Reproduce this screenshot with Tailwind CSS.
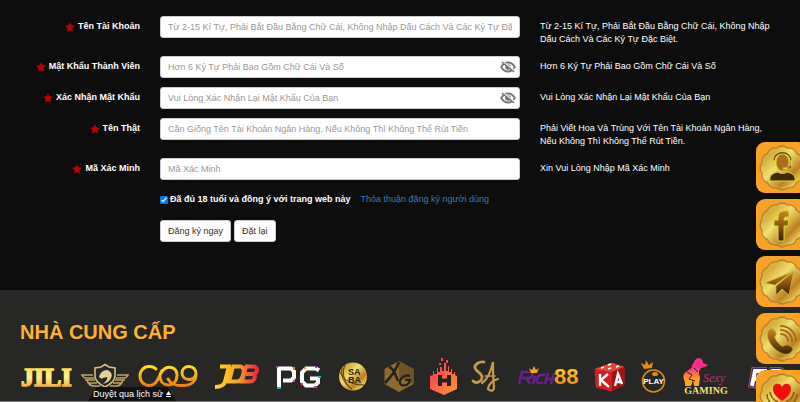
<!DOCTYPE html>
<html lang="vi">
<head>
    <meta charset="UTF-8">
    <meta name="viewport" content="width=device-width, initial-scale=1.0">
    <title>Đăng ký</title>
    <script src="https://cdn.jsdelivr.net/npm/@tailwindcss/browser@4"></script>
</head>
<body class="flex min-h-screen flex-col bg-[#0d0d0d] font-['Liberation_Sans',Arial,sans-serif] text-[9px] leading-[13px] text-white">

    <!-- shared shapes -->
    <svg class="absolute size-0" aria-hidden="true">
        <defs>
            <linearGradient id="metal" x1="0" y1="0" x2="1" y2="1">
                <stop offset="0" stop-color="#b98b2c"/>
                <stop offset=".25" stop-color="#d9b540"/>
                <stop offset=".42" stop-color="#efdf70"/>
                <stop offset=".68" stop-color="#bd8120"/>
                <stop offset=".85" stop-color="#ecd05c"/>
                <stop offset="1" stop-color="#a86f1c"/>
            </linearGradient>
            <linearGradient id="dark" x1="0" y1="0" x2="0" y2="1">
                <stop offset="0" stop-color="#d08a1c"/>
                <stop offset="1" stop-color="#3a2008"/>
            </linearGradient>
            <linearGradient id="gold" x1="0" y1="0" x2="0" y2="1">
                <stop offset="0" stop-color="#ffd92a"/>
                <stop offset=".5" stop-color="#fff08a"/>
                <stop offset="1" stop-color="#e08a12"/>
            </linearGradient>
            <linearGradient id="amber" x1="0" y1="0" x2="0" y2="1">
                <stop offset="0" stop-color="#ffdf1c"/>
                <stop offset="1" stop-color="#f07d13"/>
            </linearGradient>
            <linearGradient id="fire" x1="0" y1="0" x2="1" y2="0">
                <stop offset="0" stop-color="#ffdc1f"/>
                <stop offset=".55" stop-color="#f8a02a"/>
                <stop offset="1" stop-color="#f0283c"/>
            </linearGradient>
            <linearGradient id="coral" x1="0" y1="0" x2="1" y2="1">
                <stop offset="0" stop-color="#fb2f57"/>
                <stop offset="1" stop-color="#ff9a35"/>
            </linearGradient>
            <linearGradient id="pink" x1="0" y1="0" x2="0" y2="1">
                <stop offset=".35" stop-color="#ff2c8c"/>
                <stop offset=".75" stop-color="#ffa21f"/>
            </linearGradient>
            <symbol id="star" viewBox="0 0 10 10"><path d="M5 .2l1.500 3.100 3.400.500-2.500 2.400.600 3.400L5 8 2 9.600l.600-3.400L.100 3.800l3.400-.500z" fill="#c00000"/></symbol>
            <symbol id="eye-off" viewBox="0 0 16 12">
                <path d="M1.200 6C3 2.900 5.400 1.500 8 1.500S13 2.900 14.800 6C13 9.100 10.600 10.500 8 10.500S3 9.100 1.200 6z" fill="none" stroke="#777" stroke-width="1.800"/>
                <circle cx="8" cy="6" r="2.800" fill="#777"/>
                <path d="M2.800 .600L15 10.200" stroke="#fff" stroke-width="1.500"/>
                <path d="M1.800 1L14.200 11" stroke="#777" stroke-width="1.600"/>
            </symbol>
            <symbol id="badge" viewBox="0 0 51 51">
                <path d="M45.800 31.300A7.500 7.500 0 0 1 40.500 40.500A7.500 7.500 0 0 1 31.300 45.800A7.500 7.500 0 0 1 20.700 45.800A7.500 7.500 0 0 1 11.500 40.500A7.500 7.500 0 0 1 6.200 31.300A7.500 7.500 0 0 1 6.200 20.700A7.500 7.500 0 0 1 11.500 11.500A7.500 7.500 0 0 1 20.700 6.200A7.500 7.500 0 0 1 31.300 6.200A7.500 7.500 0 0 1 40.500 11.500A7.500 7.500 0 0 1 45.800 20.700A7.500 7.500 0 0 1 45.800 31.300z" fill="url(#metal)" stroke="#b9822a" stroke-width="1.300" stroke-linejoin="round"/>
                <circle cx="26" cy="26" r="19.500" fill="none" stroke="#f0dc78" stroke-width="1" opacity=".3"/>
            </symbol>
        </defs>
    </svg>

    <form class="pt-4 pb-12">
        <div class="grid grid-cols-[140px_minmax(0,3fr)_minmax(0,2fr)] items-start gap-x-5 gap-y-[9px] pr-5">
            <label for="account" class="flex items-center justify-end gap-[3px] pt-1 font-bold"><svg class="size-[10px]"><use href="#star"/></svg>Tên Tài Khoản</label>
            <input id="account" type="text" placeholder="Từ 2-15 Kí Tự, Phải Bắt Đầu Bằng Chữ Cái, Không Nhập Dấu Cách Và Các Ký Tự Đặc Biệt." class="h-[22px] w-full rounded-[3px] border border-[#ccc] bg-white px-[7px] text-[#555] placeholder:text-[#999]">
            <p class="pt-1 pb-px">Từ 2-15 Kí Tự, Phải Bắt Đầu Bằng Chữ Cái, Không Nhập Dấu Cách Và Các Ký Tự Đặc Biệt.</p>

            <label for="password" class="flex items-center justify-end gap-[3px] pt-1 font-bold"><svg class="size-[10px]"><use href="#star"/></svg>Mật Khẩu Thành Viên</label>
            <div class="relative">
                <input id="password" type="password" placeholder="Hơn 6 Ký Tự Phải Bao Gồm Chữ Cái Và Số" class="block h-[22px] w-full rounded-[3px] border border-[#ccc] bg-white px-[7px] text-[#555] placeholder:text-[#999]">
                <button type="button" aria-label="Hiện mật khẩu" class="absolute top-[5px] right-1"><svg class="h-3 w-4"><use href="#eye-off"/></svg></button>
            </div>
            <p class="pt-1 pb-px">Hơn 6 Ký Tự Phải Bao Gồm Chữ Cái Và Số</p>

            <label for="confirm" class="flex items-center justify-end gap-[3px] pt-1 font-bold"><svg class="size-[10px]"><use href="#star"/></svg>Xác Nhận Mật Khẩu</label>
            <div class="relative">
                <input id="confirm" type="password" placeholder="Vui Lòng Xác Nhận Lại Mật Khẩu Của Bạn" class="block h-[22px] w-full rounded-[3px] border border-[#ccc] bg-white px-[7px] text-[#555] placeholder:text-[#999]">
                <button type="button" aria-label="Hiện mật khẩu" class="absolute top-[5px] right-1"><svg class="h-3 w-4"><use href="#eye-off"/></svg></button>
            </div>
            <p class="pt-1 pb-px">Vui Lòng Xác Nhận Lại Mật Khẩu Của Bạn</p>

            <label for="realname" class="flex items-center justify-end gap-[3px] pt-1 font-bold"><svg class="size-[10px]"><use href="#star"/></svg>Tên Thật</label>
            <input id="realname" type="text" placeholder="Cần Giống Tên Tài Khoản Ngân Hàng, Nếu Không Thì Không Thể Rút Tiền" class="h-[22px] w-full rounded-[3px] border border-[#ccc] bg-white px-[7px] text-[#555] placeholder:text-[#999]">
            <p class="pt-1 pb-px">Phải Viết Hoa Và Trùng Với Tên Tài Khoản Ngân Hàng, Nếu Không Thì Không Thể Rút Tiền.</p>

            <label for="captcha" class="flex items-center justify-end gap-[3px] pt-1 font-bold"><svg class="size-[10px]"><use href="#star"/></svg>Mã Xác Minh</label>
            <input id="captcha" type="text" placeholder="Mã Xác Minh" class="h-[22px] w-full rounded-[3px] border border-[#ccc] bg-white px-[7px] text-[#555] placeholder:text-[#999]">
            <p class="pt-1 pb-px">Xin Vui Lòng Nhập Mã Xác Minh</p>
        </div>

        <div class="mt-[13px] flex items-center pl-40">
            <input id="agree" type="checkbox" checked class="mr-[2px] size-2 accent-[#0075ff]">
            <label for="agree" class="font-bold">Đã đủ 18 tuổi và đồng ý với trang web này</label>
            <a href="#" class="ml-[10px] text-[#337ab7]">Thỏa thuận đăng ký người dùng</a>
        </div>

        <div class="mt-[14px] flex gap-[3px] pl-40">
            <button type="submit" class="h-[22px] rounded-[3px] border border-[#ccc] bg-white px-[7px] text-[#333]">Đăng ký ngay</button>
            <button type="reset" class="h-[22px] rounded-[3px] border border-[#ccc] bg-white px-[7px] text-[#333]">Đặt lại</button>
        </div>
    </form>

    <section class="flex-1 overflow-hidden border-b border-[#777] bg-[#272725] pt-[30px] pb-1 pl-5">
        <h2 class="text-[20px] leading-6 font-bold text-[#ffb135]">NHÀ CUNG CẤP</h2>
        <div class="mt-[13px] flex gap-2">
            <!-- JILI -->
            <svg class="h-10 w-[53px] shrink-0" viewBox="0 0 53 40">
                <text x="1" y="29" font-family="Liberation Serif" font-size="26" font-weight="bold" fill="url(#gold)" stroke="url(#gold)" stroke-width="1.600">JILI</text>
            </svg>
            <!-- winged shield -->
            <svg class="h-10 w-[49px] shrink-0" viewBox="0 0 49 40" fill="none" stroke="#bfa265" stroke-width="1.600">
                <path d="M24 7.500l4 2.500 6 1v8c0 5-4 8-10 11-6-3-10-6-10-11v-8l6-1z" stroke="#d6bd84"/>
                <path d="M18 20c1-4 4-7 8-7 4 1 6 5 4 8-1 3-4 5-8 6 3-3 5-5 4-7-2 1-4 0-5 2z" fill="#e3cf9b" stroke="none"/>
                <path d="M12 18H1c1 2 2 3 4 3h8M4 23h10M6 23c1 4 3 6 7 6h6M8 26h8M36 18h11c-1 2-2 3-4 3h-8M44 23H34M42 23c-1 4-3 6-7 6h-6M40 26h-8"/>
            </svg>
            <!-- CQ9 -->
            <svg class="h-10 w-[60px] shrink-0" viewBox="0 0 60 40" fill="none" stroke="url(#amber)" stroke-width="3" stroke-linecap="round">
                <path d="M18 12c-2-2-4-2.500-7-2.500-5 0-9 4-9 9.500s4 9.500 9 9.500c8 0 9-8 13-14 5-7 15-5 15 4 0 6-4 9.500-8.500 9.500S22 25 22 19c0-2 1-4 2-5.500M30 22c3 5 6 6.500 12 6.500h3c8 0 13-4 13-11 0-5-3-8-7-8s-7 2.500-7 6.500 3 6.500 7 6.500 6-2 7-5"/>
            </svg>
            <!-- JDB -->
            <svg class="h-10 w-[54px] shrink-0" viewBox="0 0 54 40" fill="none" stroke="url(#fire)" stroke-width="4">
                <path d="M14 9.500h9l-4 15c-1 4-4 5.500-10 5.500M27 9.500l-4 15h8c6 0 10-15 3-15h-8M39 9.500h8c6 0 5 7 0 7.500h-7M41 17h5c5 0 3 7.500-2 7.500h-8l4-15"/>
            </svg>
            <!-- PG -->
            <svg class="h-10 w-[54px] shrink-0" viewBox="0 0 54 40" fill="none">
                <path d="M11 31V11.500h12l3 3v6l-3 3H15M51 13.500l-3-2H38l-4 4v9l4 4h9l3-3v-4h-8" stroke="#fff" stroke-width="4"/>
                <path d="M8 9h2v2H8zM47 9h2v2h-2z" fill="#b436e8"/>
                <path d="M25 10h2v3h-2zM36 10h2v2h-2z" fill="#ff852c"/>
                <path d="M9 30h4v2H9zM50 19h3v2h-3z" fill="#20b7c7"/>
                <path d="M25 23h2v2h-2zM33 26h2v2h-2zM46 29h3v2h-3z" fill="#e83b72"/>
            </svg>
            <!-- SABA -->
            <svg class="h-10 w-[38px] shrink-0" viewBox="0 0 38 40">
                <circle cx="23" cy="19.500" r="14" fill="url(#metal)"/>
                <path d="M12 11c-1 8 1 15 10 21M10 15c4 8 11 13 24 13M15 8c-3 7-2 14 4 22" fill="none" stroke="#4d3b17" stroke-width="1"/>
                <text x="18" y="18" font-family="Liberation Sans" font-size="9" font-weight="bold" fill="#2c220e">SA</text>
                <text x="18" y="26" font-family="Liberation Sans" font-size="9" font-weight="bold" fill="#2c220e">BA</text>
            </svg>
            <!-- XG -->
            <svg class="h-10 w-[38px] shrink-0" viewBox="0 0 38 40">
                <path d="M23 4l14.500 8v15L23 35 8.500 27V12z" fill="#8f6a2e"/>
                <path d="M23 4l14.500 8v15L23 20z" fill="#6d5428"/>
                <path d="M13 10c4 1 6 6 9 14M23 5c-3 8-8 15-14 21" fill="none" stroke="#24221d" stroke-width="2.500"/>
                <path d="M34 19c-4-2-9 1-10 5-1 5 5 6 9 2l1-3h-5" fill="none" stroke="#24221d" stroke-width="2.200"/>
            </svg>
            <!-- H -->
            <svg class="h-10 w-[36px] shrink-0" viewBox="0 0 36 40">
                <path d="M8 19l3-1v-4h1v3h3v-6h1v4h2v-5h2v4h2V6h2v8h2V9h1v6h2v-3h1v5h2v-2h1v3l2 1v13l-13 6L8 32z" fill="url(#coral)"/>
                <path d="M19 1h2v3h-2zM17 6h2v2h-2zM24 3h2v3h-2z" fill="#f34a4d"/>
                <path d="M18 18v11M27 18v11M17 23.500h11" stroke="#29211f" stroke-width="4"/>
            </svg>
            <!-- SA -->
            <svg class="h-10 w-[36px] shrink-0" viewBox="0 0 36 40" fill="none" stroke="#c69a4a" stroke-linecap="round">
                <path d="M18 5c-5-1-10 3-9 6 1 4 8 5 7 10-1 4-6 6-9 3" stroke-width="2.800"/>
                <path d="M16 26c5-3 9-12 11-21 0 9 0 19 1 25 0 4-3 5-6 2 1-6 6-9 10-10" stroke-width="2.200"/>
                <path d="M19 19h10" stroke-width="1.500"/>
            </svg>
            <!-- Rich88 -->
            <svg class="h-10 w-[69px] shrink-0" viewBox="0 0 69 40">
                <path d="M9 27l3-12h8c4 0 3 6-1 6h-7M16 21l4 6M23 27l2-8M35 18h-4c-4 0-6 8-2 8h4M38 16l-3 11M44 16l-3 11M37 22h6" fill="none" stroke="#69208d" stroke-width="2.600"/>
                <path d="M21 16l-2-5 3 2 2-4 2 4 3-2-2 5z" fill="#f6a21c"/>
                <text x="44" y="27" font-family="Liberation Sans" font-size="22" font-weight="bold" fill="url(#amber)">88</text>
            </svg>
            <!-- KA -->
            <svg class="h-10 w-[38px] shrink-0" viewBox="0 0 38 40">
                <path d="M8 12l17-6 12 4v18l-13 6-15-4z" fill="#cf2020" stroke="#cf2020" stroke-linejoin="round"/>
                <path d="M8 12l17-6 12 4-12 5z" fill="#e0483a"/>
                <path d="M25 15l12-5v18l-12 6z" fill="#a80f15"/>
                <path d="M14 11l3-1M21 8l3-1M21 12l3-1M29 10l3-1" stroke="#fff" stroke-width="1.500"/>
                <path d="M13 17v12M21 17l-7 6 8 7M28 29l3-12 4 10M29 25h5" fill="none" stroke="#fff" stroke-width="2.400"/>
            </svg>
            <!-- PLAY -->
            <svg class="h-10 w-[33px] shrink-0" viewBox="0 0 33 40">
                <path d="M11 12L8 6l4 2 1-5 3 5 4-3-1 6z" fill="#e08a1e"/>
                <circle cx="20.500" cy="24" r="11" fill="#272725" stroke="#e08a1e" stroke-width="1.600"/>
                <ellipse cx="22" cy="17" rx="3" ry="2" fill="#e08a1e"/>
                <text x="20.500" y="27" text-anchor="middle" font-family="Liberation Sans" font-size="8" font-weight="bold" fill="#fff">PLAY</text>
            </svg>
            <!-- Sexy Gaming -->
            <svg class="h-10 w-[56px] shrink-0" viewBox="0 0 56 40">
                <path d="M18 8c2-1 2-6 6-7 4 0 5 3 5 5l5 2c-2 2-5 2-7 3-3 3-2 6-1 9l-1 9h-5l-1-6-2 6h-6c1-5-3-8-1-12 2-3 6-4 8-7z" fill="url(#pink)"/>
                <path d="M13 15l5 3-3 4 6 2M20 11l4 4" fill="none" stroke="#27221f" stroke-width="1"/>
                <text x="29" y="25" font-family="Liberation Serif" font-size="12" font-style="italic" fill="#c52d78">Sexy</text>
                <text x="32" y="37" text-anchor="middle" font-family="Liberation Serif" font-size="10" font-weight="bold" fill="url(#gold)">GAMING</text>
            </svg>
            <!-- FP -->
            <svg class="h-10 w-[62px] shrink-0" viewBox="0 0 62 40" fill="none">
                <path d="M14 31l3-17h12M16 22h9M32 31l3-17h6c5 0 4 8-1 8h-6" stroke="#b2603c" stroke-width="8"/>
                <path d="M14 30l3-16h12M16 22h9M32 30l3-16h6c5 0 4 8-1 8h-6" stroke="#392b83" stroke-width="6.500"/>
                <path d="M14 29l3-15h12M16 22h9M32 29l3-15h6c5 0 4 8-1 8h-6" stroke="#fff" stroke-width="4"/>
            </svg>
        </div>
    </section>

    <!-- history tab -->
    <button type="button" class="fixed bottom-px left-[88px] flex h-[14px] items-center gap-[3px] bg-[#111] px-[5px] [clip-path:polygon(10%_0,90%_0,100%_100%,0_100%)]">
        Duyệt qua lịch sử
        <svg class="h-[6px] w-[5px]" viewBox="0 0 5 6"><path d="M2.500 0L5 4H0zM0 5h5v1H0z" fill="#fff"/></svg>
    </button>

    <!-- floating contacts -->
    <nav class="fixed top-[142px] right-0 bottom-0 flex w-11 flex-col gap-[6px] overflow-hidden">
        <a href="#" aria-label="Hỗ trợ" class="size-[51px] shrink-0 rounded-[9px] bg-[#f9a326]">
            <svg class="size-[51px]" viewBox="0 0 51 51">
                <use href="#badge"/>
                <path d="M14 39c-1-6 3-8 8-9 3 2 6 2 9 0 5 1 9 3 8 9z" fill="#43280a" stroke="#d9d92c" stroke-width="1"/>
                <ellipse cx="26.500" cy="20.500" rx="6.500" ry="8.500" fill="#a8701c" stroke="#d9d92c" stroke-width=".8"/>
                <path d="M18 19c0-11 17-11 17 0v4c0 2-3 4-6 4" fill="none" stroke="#7a4c12" stroke-width="1.300"/>
                <path d="M16.500 18h2v6h-2zM34.500 18h2v6h-2zM27 25.500h5v2h-5z" fill="#e2cf3c"/>
            </svg>
        </a>
        <a href="#" aria-label="Facebook" class="size-[51px] shrink-0 rounded-[9px] bg-[#f9a326]">
            <svg class="size-[51px]" viewBox="0 0 51 51">
                <use href="#badge"/>
                <path d="M22 42V27h-4v-6h4v-3c0-5 4-7 11-6v6c-4 0-5 0-5 3h5l-1 6h-4v15z" fill="url(#dark)" stroke="#d9d92c" stroke-width="1"/>
            </svg>
        </a>
        <a href="#" aria-label="Telegram" class="size-[51px] shrink-0 rounded-[9px] bg-[#f9a326]">
            <svg class="size-[51px]" viewBox="0 0 51 51">
                <use href="#badge"/>
                <path d="M38 15L9 27l10 2zM38 15L20 30v9l6-6 7 6z" fill="url(#dark)" stroke="#d2b443" stroke-width=".8" stroke-linejoin="round"/>
            </svg>
        </a>
        <a href="#" aria-label="Điện thoại" class="size-[51px] shrink-0 rounded-[9px] bg-[#f9a326]">
            <svg class="size-[51px]" viewBox="0 0 51 51">
                <use href="#badge"/>
                <path d="M12 18c3-4 6-3 8 2 1 3-2 3-1 5 2 4 4 6 7 8 2 1 3-2 6-1 6 2 6 5 2 8-4 3-11 0-16-5s-8-12-6-17z" fill="url(#dark)" stroke="#d2b443" stroke-width=".6"/>
                <path d="M25 21c4 0 7 3 7 7M25 17c6 0 11 5 11 11M25 13c8 0 15 7 15 15" fill="none" stroke="#a66c1a" stroke-width="2" stroke-linecap="round"/>
            </svg>
        </a>
        <a href="#" aria-label="Yêu thích" class="size-[51px] shrink-0 rounded-[9px] bg-[#f9a326]">
            <svg class="size-[51px]" viewBox="0 0 51 51">
                <use href="#badge"/>
                <path d="M26 31c-5-4-9-7-9-12 0-6 7-7 9-2 2-5 9-4 9 2 0 5-4 8-9 12z" fill="#f40d0d"/>
                <path d="M11 24c0 8 5 10 10 13M14 22c1 6 4 8 8 10M41 24c0 8-5 10-10 13M38 22c-1 6-4 8-8 10" fill="none" stroke="#8f6118" stroke-width="1.600"/>
            </svg>
        </a>
    </nav>
</body>
</html>
